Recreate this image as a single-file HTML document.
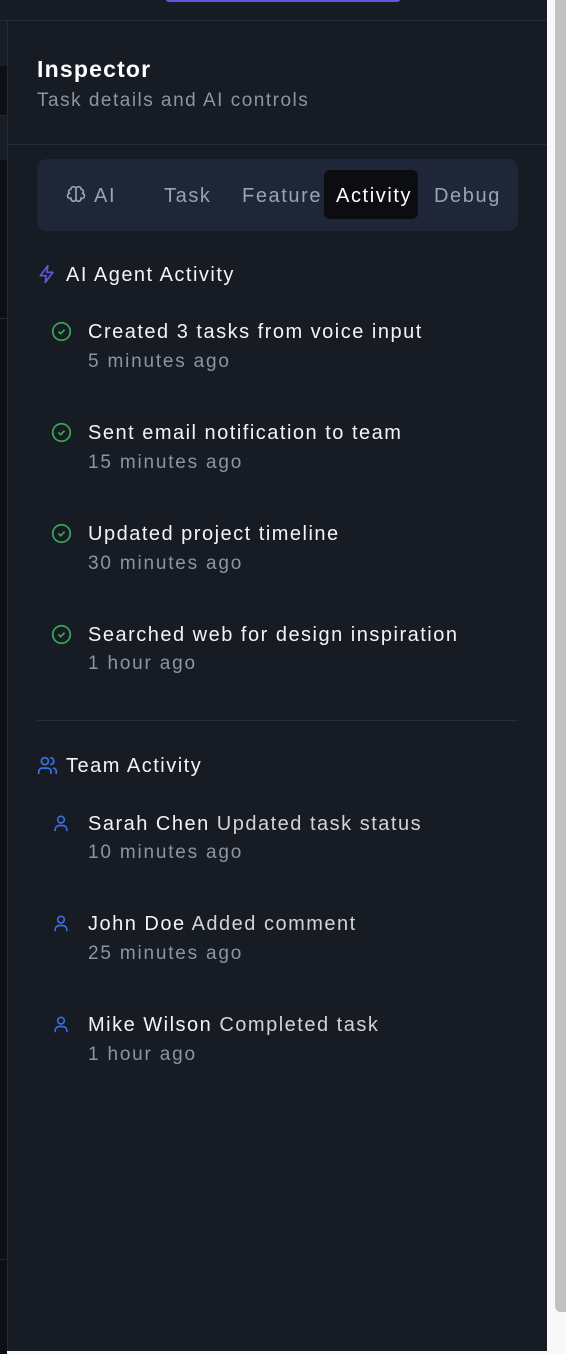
<!DOCTYPE html>
<html><head><style>
*{margin:0;padding:0;box-sizing:border-box}
body{width:566px;height:1354px;background:#f8f8f8;font-family:"Liberation Sans",sans-serif;position:relative;overflow:hidden}
.top{position:absolute;left:0;top:0;width:547px;height:21px;background:#171b24;border-bottom:1px solid #232b3b}
.pbar{position:absolute;left:166px;top:-3px;width:234px;height:5px;background:#6258e0;border-radius:3px}
.strip{position:absolute;left:0;top:21px;width:7px;height:1333px;background:#0d0f14}
.panel{position:absolute;left:7px;top:21px;width:540px;height:1330px;background:#171b24;border-left:1px solid #232b3b}
.sb{position:absolute;left:555px;top:0;width:11px;height:1312px;background:#c1c1c1;border-radius:0 0 0 6px}
.abs{position:absolute;white-space:nowrap}
.t{color:#f3f4f6;font-size:20px;letter-spacing:1.5px}
.s{color:#8b95a5;font-size:19px;letter-spacing:1.8px}
.tabs{position:absolute;left:37px;top:159px;width:481px;height:72px;background:#1f2637;border-radius:10px}
.tb{font-size:20px;color:#9aa3b2;letter-spacing:1.6px}
</style></head><body>
<div class="top"><div class="pbar"></div></div>
<div class="strip">
<div style="position:absolute;top:0;height:45px;width:7px;background:#181c25"></div>
<div style="position:absolute;top:94px;height:45px;width:7px;background:#181c25;border-top:1px solid #232b3b"></div>
<div style="position:absolute;top:297px;width:7px;border-top:1px solid #232b3b"></div>
<div style="position:absolute;top:1238px;width:7px;border-top:1px solid #232b3b"></div>
</div>
<div class="panel"></div>
<div style="position:absolute;left:7px;top:144px;width:540px;border-top:1px solid #232b3b"></div>
<div class="sb"></div>

<div class="abs" style="left:37px;top:56px;color:#fff;font-size:23px;font-weight:bold;letter-spacing:1.2px">Inspector</div>
<div class="abs s" style="left:37px;top:90px;letter-spacing:1.5px">Task details and AI controls</div>

<div class="tabs">
<svg class="abs" style="left:29px;top:26px" width="20" height="20" viewBox="0 0 24 24" fill="none" stroke="#9aa3b2" stroke-width="2"><path d="M12 5a3 3 0 0 0-6 0 3 3 0 0 0-2 5 3 3 0 0 0 2 6 3 3 0 0 0 6 1zM12 5a3 3 0 0 1 6 0 3 3 0 0 1 2 5 3 3 0 0 1-2 6 3 3 0 0 1-6 1zM12 5v14"/></svg>
<div class="abs tb" style="left:57px;top:26px">AI</div>
<div class="abs tb" style="left:127px;top:26px">Task</div>
<div class="abs tb" style="left:205px;top:26px">Feature</div>
<div class="abs" style="left:287px;top:11px;width:94px;height:49px;background:#0c0d11;border-radius:6px"></div>
<div class="abs tb" style="left:299px;top:26px;color:#fff">Activity</div>
<div class="abs tb" style="left:397px;top:26px">Debug</div>
</div>

<svg class="abs" style="left:37px;top:264px" width="20" height="20" viewBox="0 0 24 24" fill="none" stroke="#6258e0" stroke-width="2" stroke-linejoin="round"><path d="M13 2L4 14h7l-1 8 9-12h-7z"/></svg>
<div class="abs t" style="left:66px;top:264px">AI Agent Activity</div>

<div style="position:absolute;left:37px;top:720px;width:481px;border-top:1px solid #262d3d"></div>

<svg class="abs" style="left:37px;top:755px" width="21" height="21" viewBox="0 0 24 24" fill="none" stroke="#3b6fe0" stroke-width="2" stroke-linecap="round"><circle cx="9" cy="7" r="4"/><path d="M2 21v-2a4 4 0 0 1 4-4h6a4 4 0 0 1 4 4v2M16 3.1a4 4 0 0 1 0 7.8M22 21v-2a4 4 0 0 0-3-3.9"/></svg>
<div class="abs t" style="left:66px;top:755px">Team Activity</div>

<svg class="abs" style="left:51px;top:321px" width="21" height="21" viewBox="0 0 24 24" fill="none" stroke="#3aa655" stroke-width="2"><circle cx="12" cy="12" r="10"/><path d="M8.5 12l2.5 2.5 4.5-4.5"/></svg>
<div class="abs t" style="left:88px;top:321px">Created 3 tasks from voice input</div>
<div class="abs s" style="left:88px;top:351px">5 minutes ago</div>
<svg class="abs" style="left:51px;top:422px" width="21" height="21" viewBox="0 0 24 24" fill="none" stroke="#3aa655" stroke-width="2"><circle cx="12" cy="12" r="10"/><path d="M8.5 12l2.5 2.5 4.5-4.5"/></svg>
<div class="abs t" style="left:88px;top:422px">Sent email notification to team</div>
<div class="abs s" style="left:88px;top:452px">15 minutes ago</div>
<svg class="abs" style="left:51px;top:523px" width="21" height="21" viewBox="0 0 24 24" fill="none" stroke="#3aa655" stroke-width="2"><circle cx="12" cy="12" r="10"/><path d="M8.5 12l2.5 2.5 4.5-4.5"/></svg>
<div class="abs t" style="left:88px;top:523px">Updated project timeline</div>
<div class="abs s" style="left:88px;top:553px">30 minutes ago</div>
<svg class="abs" style="left:51px;top:624px" width="21" height="21" viewBox="0 0 24 24" fill="none" stroke="#3aa655" stroke-width="2"><circle cx="12" cy="12" r="10"/><path d="M8.5 12l2.5 2.5 4.5-4.5"/></svg>
<div class="abs t" style="left:88px;top:624px">Searched web for design inspiration</div>
<div class="abs s" style="left:88px;top:653px">1 hour ago</div>

<svg class="abs" style="left:51px;top:813px" width="20" height="20" viewBox="0 0 24 24" fill="none" stroke="#3b6fe0" stroke-width="2" stroke-linecap="round"><circle cx="12" cy="8" r="4"/><path d="M5 21v-1a5 5 0 0 1 5-5h4a5 5 0 0 1 5 5v1"/></svg>
<div class="abs t" style="left:88px;top:813px">Sarah Chen <span style="color:#d1d5db">Updated task status</span></div>
<div class="abs s" style="left:88px;top:842px">10 minutes ago</div>
<svg class="abs" style="left:51px;top:913px" width="20" height="20" viewBox="0 0 24 24" fill="none" stroke="#3b6fe0" stroke-width="2" stroke-linecap="round"><circle cx="12" cy="8" r="4"/><path d="M5 21v-1a5 5 0 0 1 5-5h4a5 5 0 0 1 5 5v1"/></svg>
<div class="abs t" style="left:88px;top:913px">John Doe <span style="color:#d1d5db">Added comment</span></div>
<div class="abs s" style="left:88px;top:943px">25 minutes ago</div>
<svg class="abs" style="left:51px;top:1014px" width="20" height="20" viewBox="0 0 24 24" fill="none" stroke="#3b6fe0" stroke-width="2" stroke-linecap="round"><circle cx="12" cy="8" r="4"/><path d="M5 21v-1a5 5 0 0 1 5-5h4a5 5 0 0 1 5 5v1"/></svg>
<div class="abs t" style="left:88px;top:1014px">Mike Wilson <span style="color:#d1d5db">Completed task</span></div>
<div class="abs s" style="left:88px;top:1044px">1 hour ago</div>
</body></html>
